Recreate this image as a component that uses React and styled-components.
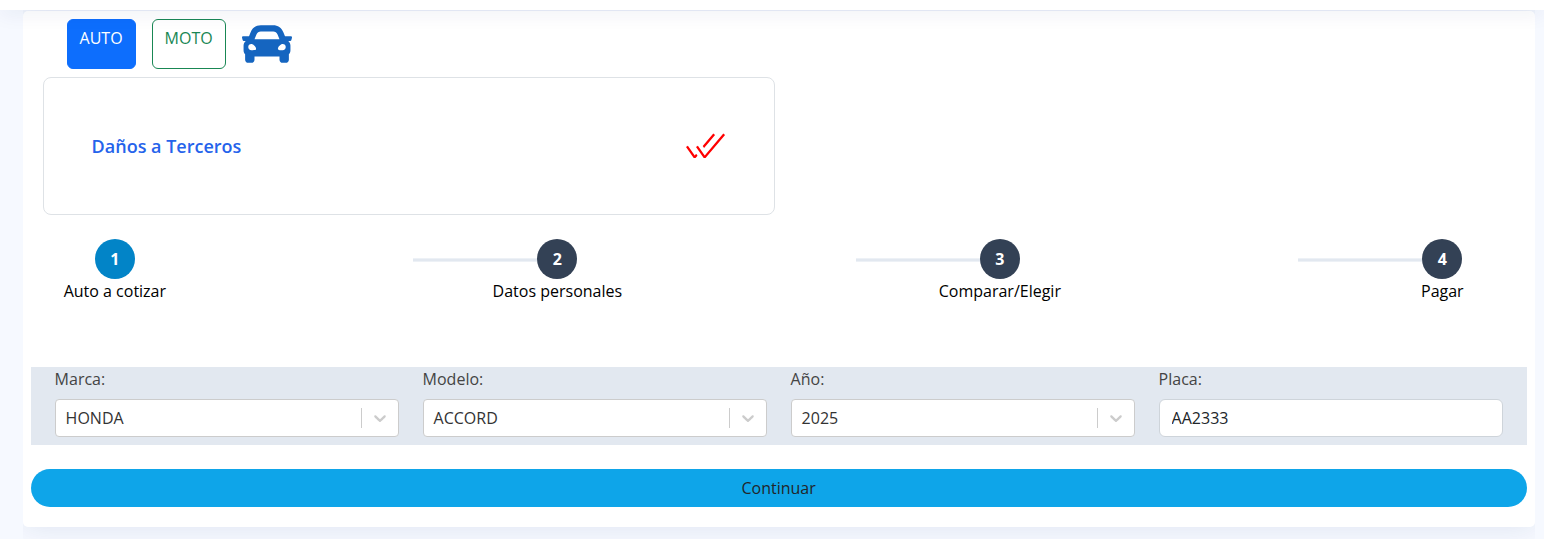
import React from "react";
import styled, { createGlobalStyle } from "styled-components";
import { FaCar } from "react-icons/fa";
import { VscCheckAll } from "react-icons/vsc";

const GlobalStyle = createGlobalStyle`
  *, *::before, *::after { box-sizing: border-box; }
  body {
    margin: 0;
    background: #f6f9ff;
    color: #444444;
    font: 400 16px/24px "Open Sans", sans-serif;
    overflow: hidden;
  }
  button, input { font: inherit; }
`;

const Header = styled.header`
  position: relative;
  z-index: 2;
  height: 10px;
  background: #fff;
  box-shadow: 0 2px 20px rgba(1, 41, 112, 0.1);
`;

const Main = styled.main`
  height: 529px;
  margin: 0 9.4px 0 22.6px;
  padding-top: 1px;
  overflow: hidden;
`;

const Card = styled.section`
  display: flex;
  flex-direction: column;
  height: 516px;
  padding: 8px 8px 20px;
  background: #fff;
  border-radius: 5px;
  box-shadow: 0 0 30px rgba(1, 41, 112, 0.1);
`;

const TypeBar = styled.div`
  display: flex;
  gap: 16px;
  padding: 0 36px;
  height: 50px;

  svg { color: #1565c0; }
`;

const TypeButton = styled.button`
  display: flex;
  align-items: flex-start;
  justify-content: center;
  height: 50px;
  width: ${(p) => p.$width}px;
  padding: 6px 0;
  border: 1px solid ${(p) => (p.$active ? "#0d6efd" : "#198754")};
  border-radius: 6px;
  background: ${(p) => (p.$active ? "#0d6efd" : "#fff")};
  color: ${(p) => (p.$active ? "#fff" : "#198754")};
`;

const Coverage = styled.div`
  display: flex;
  align-items: center;
  justify-content: space-between;
  width: 732px;
  height: 138px;
  margin: 8px 0 0 12px;
  padding: 0 48px;
  border: 1px solid #dee2e6;
  border-radius: 8px;

  svg { color: #ff0000; }
`;

const CoverageTitle = styled.h2`
  margin: 0;
  color: #2563eb;
  font-size: 18px;
  font-weight: 600;
  line-height: 28px;
`;

const Steps = styled.ol`
  display: flex;
  justify-content: space-between;
  height: 128px;
  margin: 0 -60px;
  padding: 24px 0 0;
  list-style: none;
`;

const Step = styled.li`
  display: flex;
  flex-direction: column;
  align-items: center;
  width: 288.5px;
  color: #000;
`;

const StepTop = styled.div`
  display: grid;
  grid-template-columns: 1fr 40px 1fr;
  align-items: center;
  width: 100%;
  height: 40px;
`;

const Connector = styled.span`
  height: 4px;
  margin-top: 2px;
  border: solid #edf1f6;
  border-width: 1px 0;
  background: #e2e8f0;
  visibility: ${(p) => (p.$visible ? "visible" : "hidden")};
`;

const Circle = styled.span`
  display: grid;
  place-items: center;
  width: 40px;
  height: 40px;
  border-radius: 50%;
  background: ${(p) => (p.$active ? "#0284c7" : "#334155")};
  color: #fff;
  font-weight: 700;
`;

const Form = styled.div`
  display: grid;
  grid-template-columns: repeat(4, 344px);
  column-gap: 24px;
  height: 78px;
  margin-top: 24px;
  padding: 0 24px;
  background: #e2e8f0;
`;

const Field = styled.label`
  display: flex;
  flex-direction: column;
  gap: 8px;
`;

const Select = styled.div`
  display: flex;
  align-items: center;
  height: 38px;
  padding-left: 10px;
  border: 1px solid #cccccc;
  border-radius: 4px;
  background: #fff;
  color: #333333;
`;

const Value = styled.span`
  flex: 1;
`;

const Divider = styled.span`
  width: 1px;
  height: 20px;
  background: #cccccc;
`;

const Indicator = styled.span`
  display: flex;
  padding: 8px;
  color: #cccccc;
`;

const PlateInput = styled.input`
  height: 38px;
  padding: 6px 12px;
  border: 1px solid #ced4da;
  border-radius: 6px;
  background: #fff;
  color: #212529;
`;

const Submit = styled.button`
  height: 38px;
  margin-top: 24px;
  padding: 0;
  border: 0;
  border-radius: 19px;
  background: #0ea5e9;
  color: #212529;
`;

const steps = ["Auto a cotizar", "Datos personales", "Comparar/Elegir", "Pagar"];
const selects = [
  ["Marca:", "HONDA"],
  ["Modelo:", "ACCORD"],
  ["Año:", "2025"],
];

export default function App() {
  return (
    <>
      <GlobalStyle />
      <Header />
      <Main>
        <Card>
          <TypeBar>
            <TypeButton $active $width={69}>AUTO</TypeButton>
            <TypeButton $width={74}>MOTO</TypeButton>
            <FaCar size={50} />
          </TypeBar>
          <Coverage>
            <CoverageTitle>Daños a Terceros</CoverageTitle>
            <VscCheckAll size={40} />
          </Coverage>
          <Steps>
            {steps.map((name, i) => (
              <Step key={name}>
                <StepTop>
                  <Connector $visible={i > 0} />
                  <Circle $active={i === 0}>{i + 1}</Circle>
                </StepTop>
                {name}
              </Step>
            ))}
          </Steps>
          <Form>
            {selects.map(([label, value]) => (
              <Field key={label}>
                {label}
                <Select>
                  <Value>{value}</Value>
                  <Divider />
                  <Indicator>
                    <svg width="20" height="20" viewBox="0 0 20 20" fill="currentColor">
                      <path d="M4.516 7.548c0.436-0.446 1.043-0.481 1.576 0l3.908 3.747 3.908-3.747c0.533-0.481 1.141-0.446 1.574 0 0.436 0.445 0.408 1.197 0 1.615-0.406 0.418-4.695 4.502-4.695 4.502-0.217 0.223-0.502 0.335-0.787 0.335s-0.57-0.112-0.789-0.335c0 0-4.287-4.084-4.695-4.502s-0.436-1.17 0-1.615z" />
                    </svg>
                  </Indicator>
                </Select>
              </Field>
            ))}
            <Field>
              Placa:
              <PlateInput defaultValue="AA2333" />
            </Field>
          </Form>
          <Submit>Continuar</Submit>
        </Card>
      </Main>
    </>
  );
}
